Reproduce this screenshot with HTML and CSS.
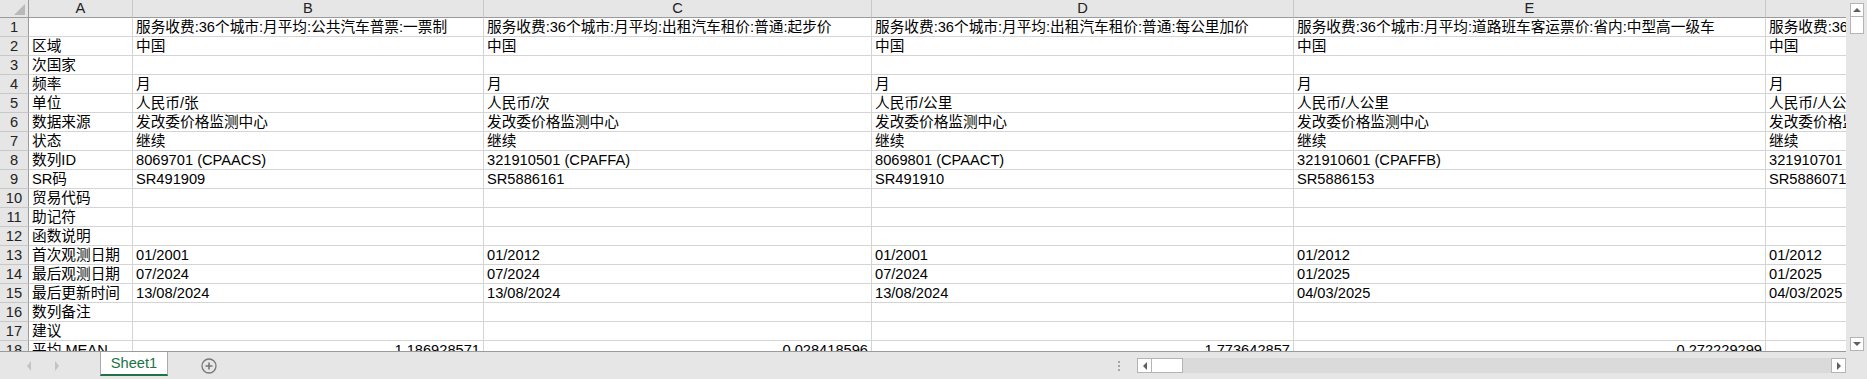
FILE: index.html
```html
<!DOCTYPE html>
<html lang="zh-CN">
<head>
    <meta charset="UTF-8">
    <title>Sheet1</title>
    <link rel="stylesheet" href="styles.css">
</head>
<body>
    <div class="window">
        <div class="main">
            <div class="sheet">
                <div class="row head">
                    <div class="corner"><span class="corner-mark"></span></div>
                    <div class="col">A</div>
                    <div class="col">B</div>
                    <div class="col">C</div>
                    <div class="col">D</div>
                    <div class="col">E</div>
                    <div class="col">F</div>
                </div>
                <div class="row">
                    <div class="num">1</div>
                    <div class="cell"></div>
                    <div class="cell">服务收费:36个城市:月平均:公共汽车普票:一票制</div>
                    <div class="cell">服务收费:36个城市:月平均:出租汽车租价:普通:起步价</div>
                    <div class="cell">服务收费:36个城市:月平均:出租汽车租价:普通:每公里加价</div>
                    <div class="cell">服务收费:36个城市:月平均:道路班车客运票价:省内:中型高一级车</div>
                    <div class="cell">服务收费:36个城市:月平均</div>
                </div>
                <div class="row">
                    <div class="num">2</div>
                    <div class="cell">区域</div>
                    <div class="cell">中国</div>
                    <div class="cell">中国</div>
                    <div class="cell">中国</div>
                    <div class="cell">中国</div>
                    <div class="cell">中国</div>
                </div>
                <div class="row">
                    <div class="num">3</div>
                    <div class="cell">次国家</div>
                    <div class="cell"></div>
                    <div class="cell"></div>
                    <div class="cell"></div>
                    <div class="cell"></div>
                    <div class="cell"></div>
                </div>
                <div class="row">
                    <div class="num">4</div>
                    <div class="cell">频率</div>
                    <div class="cell">月</div>
                    <div class="cell">月</div>
                    <div class="cell">月</div>
                    <div class="cell">月</div>
                    <div class="cell">月</div>
                </div>
                <div class="row">
                    <div class="num">5</div>
                    <div class="cell">单位</div>
                    <div class="cell">人民币/张</div>
                    <div class="cell">人民币/次</div>
                    <div class="cell">人民币/公里</div>
                    <div class="cell">人民币/人公里</div>
                    <div class="cell">人民币/人公里</div>
                </div>
                <div class="row">
                    <div class="num">6</div>
                    <div class="cell">数据来源</div>
                    <div class="cell">发改委价格监测中心</div>
                    <div class="cell">发改委价格监测中心</div>
                    <div class="cell">发改委价格监测中心</div>
                    <div class="cell">发改委价格监测中心</div>
                    <div class="cell">发改委价格监测中心</div>
                </div>
                <div class="row">
                    <div class="num">7</div>
                    <div class="cell">状态</div>
                    <div class="cell">继续</div>
                    <div class="cell">继续</div>
                    <div class="cell">继续</div>
                    <div class="cell">继续</div>
                    <div class="cell">继续</div>
                </div>
                <div class="row">
                    <div class="num">8</div>
                    <div class="cell">数列ID</div>
                    <div class="cell">8069701 (CPAACS)</div>
                    <div class="cell">321910501 (CPAFFA)</div>
                    <div class="cell">8069801 (CPAACT)</div>
                    <div class="cell">321910601 (CPAFFB)</div>
                    <div class="cell">321910701 (CPAFFC)</div>
                </div>
                <div class="row">
                    <div class="num">9</div>
                    <div class="cell">SR码</div>
                    <div class="cell">SR491909</div>
                    <div class="cell">SR5886161</div>
                    <div class="cell">SR491910</div>
                    <div class="cell">SR5886153</div>
                    <div class="cell">SR5886071</div>
                </div>
                <div class="row">
                    <div class="num">10</div>
                    <div class="cell">贸易代码</div>
                    <div class="cell"></div>
                    <div class="cell"></div>
                    <div class="cell"></div>
                    <div class="cell"></div>
                    <div class="cell"></div>
                </div>
                <div class="row">
                    <div class="num">11</div>
                    <div class="cell">助记符</div>
                    <div class="cell"></div>
                    <div class="cell"></div>
                    <div class="cell"></div>
                    <div class="cell"></div>
                    <div class="cell"></div>
                </div>
                <div class="row">
                    <div class="num">12</div>
                    <div class="cell">函数说明</div>
                    <div class="cell"></div>
                    <div class="cell"></div>
                    <div class="cell"></div>
                    <div class="cell"></div>
                    <div class="cell"></div>
                </div>
                <div class="row">
                    <div class="num">13</div>
                    <div class="cell">首次观测日期</div>
                    <div class="cell">01/2001</div>
                    <div class="cell">01/2012</div>
                    <div class="cell">01/2001</div>
                    <div class="cell">01/2012</div>
                    <div class="cell">01/2012</div>
                </div>
                <div class="row">
                    <div class="num">14</div>
                    <div class="cell">最后观测日期</div>
                    <div class="cell">07/2024</div>
                    <div class="cell">07/2024</div>
                    <div class="cell">07/2024</div>
                    <div class="cell">01/2025</div>
                    <div class="cell">01/2025</div>
                </div>
                <div class="row">
                    <div class="num">15</div>
                    <div class="cell">最后更新时间</div>
                    <div class="cell">13/08/2024</div>
                    <div class="cell">13/08/2024</div>
                    <div class="cell">13/08/2024</div>
                    <div class="cell">04/03/2025</div>
                    <div class="cell">04/03/2025</div>
                </div>
                <div class="row">
                    <div class="num">16</div>
                    <div class="cell">数列备注</div>
                    <div class="cell"></div>
                    <div class="cell"></div>
                    <div class="cell"></div>
                    <div class="cell"></div>
                    <div class="cell"></div>
                </div>
                <div class="row">
                    <div class="num">17</div>
                    <div class="cell">建议</div>
                    <div class="cell"></div>
                    <div class="cell"></div>
                    <div class="cell"></div>
                    <div class="cell"></div>
                    <div class="cell"></div>
                </div>
                <div class="row">
                    <div class="num">18</div>
                    <div class="cell">平均 MEAN</div>
                    <div class="cell right">1.186928571</div>
                    <div class="cell right">0.028418596</div>
                    <div class="cell right">1.773642857</div>
                    <div class="cell right">0.272229299</div>
                    <div class="cell"></div>
                </div>
            </div>
            <div class="vscroll">
                <div class="sbox"><span class="tri up"></span></div>
                <div class="sbox thumb-v"></div>
                <div class="vtrack"></div>
                <div class="sbox"><span class="tri down"></span></div>
            </div>
        </div>
        <div class="bar">
            <div class="nav">
                <span class="tri nav-left"></span>
                <span class="tri nav-right"></span>
            </div>
            <div class="tab">Sheet1</div>
            <div class="add">
                <svg width="16" height="16" viewBox="0 0 16 16">
                    <circle cx="8" cy="8" r="7" fill="none" stroke="#777" stroke-width="1.3"/>
                    <path d="M8 4.5v7M4.5 8h7" stroke="#777" stroke-width="1.6"/>
                </svg>
            </div>
            <div class="split">
                <span></span><span></span><span></span>
            </div>
            <div class="hscroll">
                <div class="sbox"><span class="tri left"></span></div>
                <div class="sbox thumb-h"></div>
                <div class="htrack"></div>
                <div class="sbox"><span class="tri right"></span></div>
            </div>
        </div>
    </div>
</body>
</html>
```

FILE: styles.css
```css
html {
    height: 379px;
    overflow: hidden;
}

body {
    margin: 0;
    width: 1867px;
    height: 379px;
    overflow: hidden;
    font-family: "Liberation Sans", "Noto Sans CJK SC", sans-serif;
    font-size: 14.67px;
    color: #000;
    background-color: #fff;
}

.window {
    display: flex;
    flex-direction: column;
    height: 379px;
}

.main {
    display: flex;
    height: 352px;
}

/* grid of cells */
.sheet {
    width: 1846px;
    height: 352px;
    overflow: hidden;
    box-sizing: border-box;
    border-bottom: 1px solid #9b9b9b;
}

.row {
    display: grid;
    grid-template-columns: 29px 104px 351px 388px 422px 472px 240px;
    height: 19px;
}

.row.head {
    height: 18px;
}

.cell,
.num,
.col,
.corner {
    box-sizing: border-box;
    border-right: 1px solid #d4d4d4;
    border-bottom: 1px solid #d4d4d4;
    white-space: nowrap;
    overflow: hidden;
    line-height: 18px;
}

.cell {
    padding: 1px 3px 0;
    line-height: 17px;
}

.cell.right {
    text-align: right;
}

.num {
    background-color: #e6e6e6;
    color: #222;
    text-align: center;
    border-right-color: #9b9b9b;
    border-bottom-color: #c8c8c8;
    padding-top: 1px;
    line-height: 17px;
}

.col {
    background-color: #e6e6e6;
    color: #222;
    text-align: center;
    border-right-color: #c8c8c8;
    border-bottom-color: #9b9b9b;
    line-height: 17px;
}

.corner {
    position: relative;
    background-color: #e6e6e6;
    border-right-color: #9b9b9b;
    border-bottom-color: #9b9b9b;
}

.corner-mark {
    position: absolute;
    right: 3px;
    bottom: 2px;
    width: 0;
    height: 0;
    border-left: 11px solid transparent;
    border-bottom: 11px solid #b9b9b9;
}

/* scrollbars */
.vscroll {
    width: 21px;
    background-color: #e6e6e6;
    display: flex;
    flex-direction: column;
    align-items: center;
    padding-top: 3px;
    box-sizing: border-box;
}

.sbox {
    box-sizing: border-box;
    width: 14px;
    height: 14px;
    background-color: #fff;
    border: 1px solid #b4b4b4;
    display: flex;
    align-items: center;
    justify-content: center;
}

.thumb-v {
    height: 17px;
    border-top: none;
}

.vtrack {
    flex: 1;
}

.vscroll .sbox:last-child {
    margin-bottom: 1px;
}

.tri {
    width: 0;
    height: 0;
    display: block;
}

.tri.up {
    border-left: 4px solid transparent;
    border-right: 4px solid transparent;
    border-bottom: 4px solid #606060;
}

.tri.down {
    border-left: 4px solid transparent;
    border-right: 4px solid transparent;
    border-top: 4px solid #606060;
}

.tri.left {
    border-top: 4px solid transparent;
    border-bottom: 4px solid transparent;
    border-right: 4px solid #606060;
}

.tri.right {
    border-top: 4px solid transparent;
    border-bottom: 4px solid transparent;
    border-left: 4px solid #606060;
}

/* sheet tab bar */
.bar {
    display: flex;
    height: 27px;
    background-color: #e6e6e6;
}

.nav {
    width: 100px;
    display: flex;
    align-items: center;
    padding-left: 27px;
    box-sizing: border-box;
    gap: 24px;
}

.tri.nav-left {
    border-top: 5px solid transparent;
    border-bottom: 5px solid transparent;
    border-right: 4px solid #c3c3c3;
}

.tri.nav-right {
    border-top: 5px solid transparent;
    border-bottom: 5px solid transparent;
    border-left: 4px solid #c3c3c3;
}

.tab {
    width: 68px;
    height: 24px;
    box-sizing: border-box;
    background-color: #fff;
    border-left: 1px solid #ababab;
    border-right: 1px solid #ababab;
    border-bottom: 2px solid #217346;
    color: #217346;
    text-align: center;
    line-height: 22px;
}

.add {
    margin-left: 33px;
    display: flex;
    align-items: center;
    height: 27px;
}

.split {
    margin-left: auto;
    width: 4px;
    display: flex;
    flex-direction: column;
    justify-content: center;
    gap: 2px;
    margin-right: 15px;
}

.split span {
    width: 2px;
    height: 2px;
    background-color: #a6a6a6;
}

.hscroll {
    width: 709px;
    height: 15px;
    margin-top: 6px;
    margin-right: 21px;
    display: flex;
    background-color: #dadada;
}

.hscroll .sbox {
    width: 15px;
    height: 15px;
}

.thumb-h {
    width: 31px !important;
    border-left: none !important;
}

.htrack {
    flex: 1;
}
```
